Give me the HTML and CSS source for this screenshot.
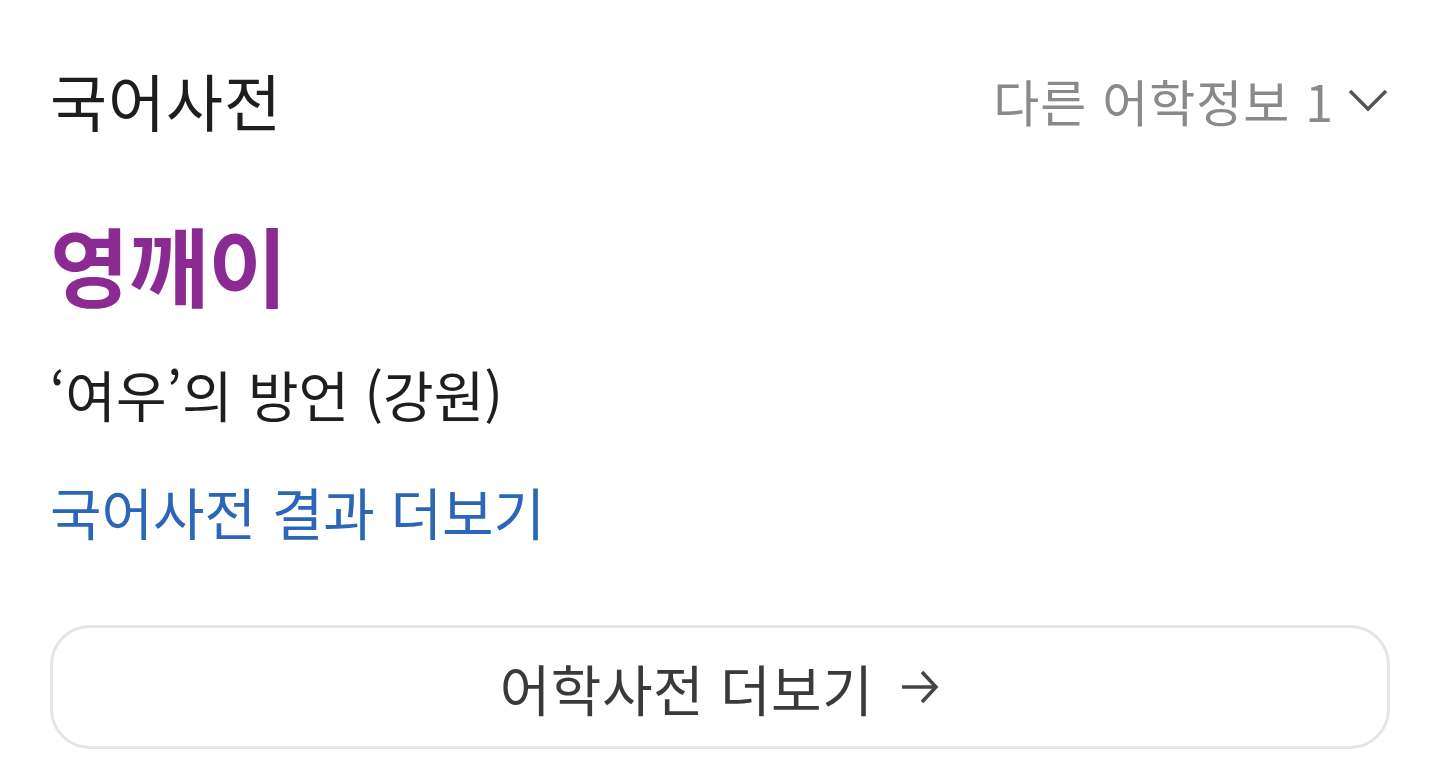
FILE: index.html
```html
<!DOCTYPE html>
<html lang="ko">
<head>
    <meta charset="UTF-8">
    <meta name="viewport" content="width=device-width, initial-scale=1.0">
    <title>국어사전</title>
    <link rel="stylesheet" href="styles.css">
</head>
<body>
    <div class="dict-box">
        <div class="dict-header">
            <h2 class="dict-title">국어사전</h2>
            <a class="other-info" href="#">
                <span>다른 어학정보 1</span>
                <svg class="chevron" viewBox="0 0 40 24" width="40" height="24">
                    <path d="M2 3 L20 21 L38 3" fill="none" stroke="#555" stroke-width="3.5"/>
                </svg>
            </a>
        </div>

        <div class="entry">
            <div class="entry-word">영깨이</div>
            <p class="entry-mean">‘여우’의 방언 (강원)</p>
            <a class="entry-more" href="#">국어사전 결과 더보기</a>
        </div>

        <a class="more-btn" href="#">
            <span>어학사전 더보기</span>
            <svg class="arrow" viewBox="0 0 40 40" width="40" height="40">
                <path d="M2 20 H36 M22 5 L36 20 L22 35" fill="none" stroke="#444" stroke-width="3.5"/>
            </svg>
        </a>
    </div>
</body>
</html>
```

FILE: styles.css
```css
body {
    margin: 0;
    background-color: #fff;
    font-family: "Noto Sans CJK KR", "Noto Sans", sans-serif;
}

a {
    text-decoration: none;
}

.dict-box {
    padding: 60px 50px 0;
}

.dict-header {
    display: flex;
    justify-content: space-between;
    align-items: center;
    height: 80px;
}

.dict-title {
    margin: 0;
    font-size: 62px;
    font-weight: 400;
    letter-spacing: 1px;
    color: #1e1e1e;
    line-height: 80px;
}

.other-info {
    display: flex;
    align-items: center;
    gap: 14px;
    font-size: 50px;
    letter-spacing: 1px;
    color: #8a8a8a;
    line-height: 80px;
}

.chevron {
    margin-right: 2px;
}

.entry {
    display: flex;
    flex-direction: column;
    align-items: flex-start;
}

.entry-word {
    margin-top: 74px;
    font-size: 86px;
    font-weight: 700;
    color: #8a2a92;
    line-height: 100px;
}

.entry-mean {
    margin: 44px 0 0;
    font-size: 55px;
    color: #1e1e1e;
    line-height: 70px;
}

.entry-more {
    margin-top: 48px;
    font-size: 56px;
    color: #2c66b8;
    line-height: 70px;
}

.more-btn {
    display: flex;
    justify-content: center;
    align-items: center;
    gap: 27px;
    box-sizing: border-box;
    height: 124px;
    margin-top: 79px;
    border: 3px solid #e5e5e5;
    border-radius: 40px;
    font-size: 55px;
    letter-spacing: 0.5px;
    color: #3a3a3a;
}
```
